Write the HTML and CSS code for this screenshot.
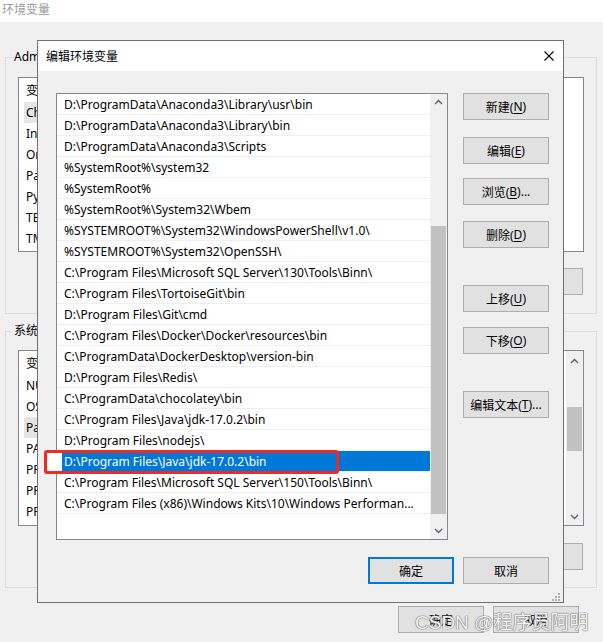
FILE: index.html
```html
<!DOCTYPE html>
<html lang="zh-CN">
<head>
<meta charset="utf-8">
<title>编辑环境变量</title>
<link rel="stylesheet" href="styles.css">
</head>
<body>
<div class="bgwin">
  <div class="bg-title">环境变量</div>
  <div class="bg-body">
    <div class="group">
      <div class="group-label">Administrator 的用户变量(<u>U</u>)</div>
      <div class="bglist">
        <div class="bg-head"><span class="col1">变量</span><span>值</span></div>
        <div class="bg-row sel">ChocolateyLastPathUpdate</div>
        <div class="bg-row">IntelliJ IDEA</div>
        <div class="bg-row">OneDrive</div>
        <div class="bg-row">Path</div>
        <div class="bg-row">PyCharm</div>
        <div class="bg-row">TEMP</div>
        <div class="bg-row">TMP</div>
      </div>
      <div class="bg-btns">
        <div class="btn">新建(<u>N</u>)...</div>
        <div class="btn">编辑(<u>E</u>)...</div>
        <div class="btn">删除(<u>D</u>)</div>
      </div>
    </div>
    <div class="group group-sys">
      <div class="group-label">系统变量(<u>S</u>)</div>
      <div class="bglist has-scroll">
        <div class="bg-items">
          <div class="bg-head"><span class="col1">变量</span><span>值</span></div>
          <div class="bg-row">NUMBER_OF_PROCESSORS</div>
          <div class="bg-row">OS</div>
          <div class="bg-row sel">Path</div>
          <div class="bg-row">PATHEXT</div>
          <div class="bg-row">PROCESSOR_ARCHITECTURE</div>
          <div class="bg-row">PROCESSOR_IDENTIFIER</div>
          <div class="bg-row">PROCESSOR_LEVEL</div>
        </div>
        <div class="vscroll vscroll-sys">
          <svg class="arrow" width="17" height="17" viewBox="0 0 17 17"><polyline points="5,10 8.5,6.5 12,10" fill="none" stroke="#606060" stroke-width="1.3"/></svg>
          <div class="thumb thumb-sys"></div>
          <svg class="arrow arrow-down" width="17" height="17" viewBox="0 0 17 17"><polyline points="5,7 8.5,10.5 12,7" fill="none" stroke="#606060" stroke-width="1.3"/></svg>
        </div>
      </div>
      <div class="bg-btns bg-btns-sys">
        <div class="btn">新建(<u>W</u>)...</div>
        <div class="btn">编辑(<u>I</u>)...</div>
        <div class="btn">删除(<u>L</u>)</div>
      </div>
    </div>
    <div class="bg-footer">
      <div class="btn">确定</div>
      <div class="btn">取消</div>
    </div>
  </div>
</div>

<div class="dialog">
  <div class="dlg-title">
    <span>编辑环境变量</span>
    <svg class="close" width="10" height="10" viewBox="0 0 10 10"><path d="M0.5 0.5 L9.5 9.5 M9.5 0.5 L0.5 9.5" stroke="#000" stroke-width="1.1" fill="none"/></svg>
  </div>
  <div class="dlg-body">
    <div class="plist">
      <div class="items">
        <div class="row">D:\ProgramData\Anaconda3\Library\usr\bin</div>
        <div class="row">D:\ProgramData\Anaconda3\Library\bin</div>
        <div class="row">D:\ProgramData\Anaconda3\Scripts</div>
        <div class="row">%SystemRoot%\system32</div>
        <div class="row">%SystemRoot%</div>
        <div class="row">%SystemRoot%\System32\Wbem</div>
        <div class="row">%SYSTEMROOT%\System32\WindowsPowerShell\v1.0\</div>
        <div class="row">%SYSTEMROOT%\System32\OpenSSH\</div>
        <div class="row">C:\Program Files\Microsoft SQL Server\130\Tools\Binn\</div>
        <div class="row">C:\Program Files\TortoiseGit\bin</div>
        <div class="row">D:\Program Files\Git\cmd</div>
        <div class="row">C:\Program Files\Docker\Docker\resources\bin</div>
        <div class="row">C:\ProgramData\DockerDesktop\version-bin</div>
        <div class="row">D:\Program Files\Redis\</div>
        <div class="row">C:\ProgramData\chocolatey\bin</div>
        <div class="row">C:\Program Files\Java\jdk-17.0.2\bin</div>
        <div class="row">D:\Program Files\nodejs\</div>
        <div class="row selected">D:\Program Files\Java\jdk-17.0.2\bin</div>
        <div class="row">C:\Program Files\Microsoft SQL Server\150\Tools\Binn\</div>
        <div class="row">C:\Program Files (x86)\Windows Kits\10\Windows Performan...</div>
      </div>
      <div class="vscroll">
        <svg class="arrow" width="17" height="17" viewBox="0 0 17 17"><polyline points="5,10 8.5,6.5 12,10" fill="none" stroke="#606060" stroke-width="1.3"/></svg>
        <div class="thumb"></div>
        <svg class="arrow arrow-down" width="17" height="17" viewBox="0 0 17 17"><polyline points="5,7 8.5,10.5 12,7" fill="none" stroke="#606060" stroke-width="1.3"/></svg>
      </div>
    </div>
    <div class="side">
      <div class="btn">新建(<u>N</u>)</div>
      <div class="btn m17">编辑(<u>E</u>)</div>
      <div class="btn m14">浏览(<u>B</u>)...</div>
      <div class="btn m16">删除(<u>D</u>)</div>
      <div class="btn m37">上移(<u>U</u>)</div>
      <div class="btn m15">下移(<u>O</u>)</div>
      <div class="btn m37">编辑文本(<u>T</u>)...</div>
    </div>
  </div>
  <div class="dlg-footer">
    <div class="btn btn-default">确定</div>
    <div class="btn">取消</div>
  </div>
  <svg class="grip" width="9" height="9" viewBox="0 0 9 9">
    <rect x="6" y="0" width="2" height="2" fill="#b4b4b4"/>
    <rect x="3" y="3" width="2" height="2" fill="#b4b4b4"/>
    <rect x="6" y="3" width="2" height="2" fill="#b4b4b4"/>
    <rect x="0" y="6" width="2" height="2" fill="#b4b4b4"/>
    <rect x="3" y="6" width="2" height="2" fill="#b4b4b4"/>
    <rect x="6" y="6" width="2" height="2" fill="#b4b4b4"/>
  </svg>
</div>

<div class="redmark"></div>
<div class="watermark">CSDN @程序员阿明</div>
</body>
</html>
```

FILE: styles.css
```css
* { box-sizing: border-box; margin: 0; padding: 0; }
html, body { width: 603px; height: 642px; overflow: hidden; }
body {
  position: relative;
  background: #f0f0f0;
  font-family: "Noto Sans", "Noto Sans CJK SC", sans-serif;
  font-size: 12px;
  color: #000;
}
u { text-decoration: underline; text-underline-offset: 2px; }

/* ---------- background window ---------- */
.bg-title {
  height: 22px;
  background: #fff;
  color: #9a9a9a;
  padding-left: 2px;
  line-height: 20px;
}
.bg-body { padding: 35px 0 0 5px; }
.group {
  position: relative;
  width: 592px;
  height: 257px;
  border: 1px solid #dcdcdc;
  padding: 19px 12px 0 12px;
}
.group-sys { margin-top: 17px; padding-top: 18px; }
.group-label {
  position: absolute;
  top: -9px;
  left: 6px;
  padding: 0 2px;
  line-height: 16px;
  background: #f0f0f0;
}
.bglist {
  height: 175px;
  background: #fff;
  border: 1px solid #828790;
  display: flex;
  flex-direction: column;
}
.group-sys .bglist { height: 176px; flex-direction: row; }
.bg-items { flex: 1; display: flex; flex-direction: column; }
.bg-head {
  height: 24px;
  display: flex;
  align-items: center;
  padding-left: 7px;
}
.bg-head .col1 { width: 160px; }
.bg-row {
  height: 21px;
  line-height: 21px;
  margin-left: 5px;
  padding-left: 2px;
}
.bg-row.sel { background: #e5e5e5; width: 160px; }
.bg-btns {
  display: flex;
  justify-content: flex-end;
  gap: 9px;
  margin-top: 16px;
  padding-right: 1px;
}
.bg-btns-sys { margin-top: 17px; }
.bg-footer {
  display: flex;
  gap: 9px;
  margin: 18px 0 0 393px;
}

/* ---------- shared controls ---------- */
.btn {
  width: 86px;
  height: 27px;
  background: #e1e1e1;
  border: 1px solid #adadad;
  display: flex;
  align-items: center;
  justify-content: center;
  white-space: nowrap;
}
.vscroll {
  width: 17px;
  background: #f0f0f0;
  display: flex;
  flex-direction: column;
}
.arrow { display: block; flex: none; }
.arrow-down { margin-top: auto; }
.thumb {
  width: 15px;
  height: 288px;
  margin: 115px 0 0 1px;
  background: #c1c1c1;
}
.vscroll-sys .thumb-sys { height: 44px; margin-top: 37px; }
.vscroll-sys { padding-top: 2px; }

/* ---------- dialog ---------- */
.dialog {
  position: absolute;
  left: 37px;
  top: 40px;
  width: 527px;
  height: 563px;
  border: 1px solid #707070;
  background: #f0f0f0;
  display: flex;
  flex-direction: column;
}
.dlg-title {
  height: 30px;
  flex: none;
  background: #fff;
  display: flex;
  align-items: center;
  justify-content: space-between;
  padding: 0 9px 0 8px;
}
.close { display: block; }
.dlg-body {
  display: flex;
  gap: 15px;
  padding: 22px 14px 0 18px;
}
.plist {
  width: 392px;
  height: 447px;
  border: 1px solid #828790;
  background: #fff;
  display: flex;
}
.items { flex: 1; min-width: 0; }
.row {
  height: 21px;
  line-height: 20px;
  padding-top: 1px;
  border-bottom: 1px solid #efefef;
  padding-left: 7px;
  white-space: nowrap;
}
.row.selected { background: #0078d7; color: #fff; }
.side { display: flex; flex-direction: column; }
.m14 { margin-top: 14px; }
.m15 { margin-top: 15px; }
.m16 { margin-top: 16px; }
.m17 { margin-top: 17px; }
.m37 { margin-top: 37px; }
.dlg-footer {
  display: flex;
  justify-content: flex-end;
  gap: 9px;
  margin-top: 17px;
  padding-right: 14px;
}
.btn-default { border: 2px solid #0078d7; }
.grip { position: absolute; right: 2px; bottom: 0px; }

/* ---------- overlays ---------- */
.redmark {
  position: absolute;
  left: 44px;
  top: 450px;
  width: 295px;
  height: 24px;
  border: 3px solid #ee2a24;
  border-radius: 3px;
  background: linear-gradient(to right, #fff 0, #fff 15px, transparent 15px);
}
.watermark {
  position: absolute;
  left: 415px;
  top: 613px;
  font-family: "Liberation Sans", "Noto Sans CJK SC", sans-serif;
  font-size: 19px;
  line-height: 19px;
  color: #f4f4f4;
  text-shadow: 0 0 1px #7a7a7a, 0 0 1px #7a7a7a, 0 0 1px #7a7a7a;
  white-space: nowrap;
}
```
